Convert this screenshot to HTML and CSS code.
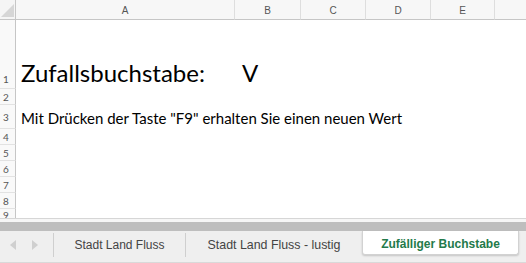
FILE: index.html
```html
<!DOCTYPE html>
<html lang="de">
<head>
<meta charset="utf-8">
<title>Zufälliger Buchstabe</title>
<link rel="stylesheet" href="styles.css">
</head>
<body>
<div class="app">
  <div class="sheet">
    <div class="corner">
      <svg width="16" height="20" viewBox="0 0 16 20"><polygon points="1,17 14,17 14,4" fill="#d6d6d6"/></svg>
    </div>
    <div class="colhead">A</div>
    <div class="colhead">B</div>
    <div class="colhead">C</div>
    <div class="colhead">D</div>
    <div class="colhead">E</div>
    <div class="colhead last"></div>

    <div class="rowhead r1">1</div>
    <div class="cell big">Zufallsbuchstabe:   V</div>

    <div class="rowhead">2</div>
    <div class="cell"></div>

    <div class="rowhead">3</div>
    <div class="cell text">Mit Drücken der Taste "F9" erhalten Sie einen neuen Wert</div>

    <div class="rowhead">4</div>
    <div class="cell"></div>
    <div class="rowhead">5</div>
    <div class="cell"></div>
    <div class="rowhead">6</div>
    <div class="cell"></div>
    <div class="rowhead">7</div>
    <div class="cell"></div>
    <div class="rowhead">8</div>
    <div class="cell"></div>
    <div class="rowhead r9">9</div>
    <div class="cell"></div>
  </div>
  <div class="gap"></div>
  <div class="scrollband"></div>
  <div class="tabbar">
    <div class="nav">
      <svg width="8" height="10" viewBox="0 0 8 10"><polygon points="7,0 7,10 1,5" fill="#cfcfcf"/></svg>
      <svg width="8" height="10" viewBox="0 0 8 10"><polygon points="1,0 1,10 7,5" fill="#cfcfcf"/></svg>
    </div>
    <div class="tab t1">Stadt Land Fluss</div>
    <div class="tab t2">Stadt Land Fluss - lustig</div>
    <div class="tab active">Zufälliger Buchstabe</div>
    <div class="filler"></div>
  </div>
</div>
</body>
</html>
```

FILE: styles.css
```css
html, body {
  margin: 0;
  padding: 0;
  background: #ffffff;
}

.app {
  width: 526px;
  height: 263px;
  overflow: hidden;
  display: flex;
  flex-direction: column;
}

.sheet {
  height: 218px;
  overflow: hidden;
  display: grid;
  grid-template-columns: 16px 219px 66px 65px 65px 64px 1fr;
  grid-template-rows: 20px 69px 16px 24px 16px 16px 16px 16px 16px 16px;
  flex: none;
}

.corner {
  background: #f5f5f5;
  border-right: 1px solid #c6c6c6;
  border-bottom: 1px solid #c6c6c6;
  box-sizing: border-box;
  line-height: 0;
}

.colhead {
  background: #f7f7f7;
  border-bottom: 1px solid #c6c6c6;
  border-right: 1px solid #dedede;
  box-sizing: border-box;
  font-family: "Liberation Sans", Arial, sans-serif;
  font-size: 10px;
  color: #555555;
  display: flex;
  align-items: center;
  justify-content: center;
  padding-top: 1px;
}

.colhead.last {
  border-right: none;
}

.rowhead {
  background: #f9f9f9;
  border-right: 1px solid #c6c6c6;
  border-bottom: 1px solid #e2e2e2;
  box-sizing: border-box;
  font-family: "Lato", "Liberation Sans", sans-serif;
  font-size: 10px;
  color: #555555;
  display: flex;
  align-items: center;
  padding-left: 3px;
}

.rowhead.r1 {
  align-items: flex-end;
  padding-bottom: 3px;
}

.rowhead.r9 {
  align-items: flex-start;
  padding-top: 1px;
  line-height: 10px;
}

.cell {
  grid-column: 2 / -1;
  background: #ffffff;
  white-space: pre;
  color: #000000;
  font-family: "Lato", "Liberation Sans", sans-serif;
  display: flex;
  padding-left: 5px;
}

.cell.big {
  font-size: 24px;
  word-spacing: 6.5px;
  align-items: flex-end;
  padding-bottom: 2px;
}

.cell.text {
  font-size: 15px;
  align-items: center;
  padding-top: 2px;
}

.gap {
  height: 3px;
  border-top: 1px solid #d6d6d6;
  background: #f6f6f6;
  flex: none;
}

.scrollband {
  height: 9px;
  background: #bebebe;
  flex: none;
}

.tabbar {
  flex: 1;
  background: #efefef;
  display: flex;
  align-items: flex-start;
  border-bottom: 1px solid #d9d9d9;
  box-sizing: border-box;
  height: 32px;
  font-family: "Liberation Sans", Arial, sans-serif;
  font-size: 12px;
  color: #444444;
}

.nav {
  width: 54px;
  height: 24px;
  margin-top: 2px;
  border-right: 1px solid #cfcfcf;
  box-sizing: border-box;
  display: flex;
  align-items: center;
  gap: 14px;
  padding-left: 9px;
}

.tab {
  height: 24px;
  margin-top: 2px;
  display: flex;
  align-items: center;
  justify-content: center;
  box-sizing: border-box;
}

.t1 {
  width: 132px;
  border-right: 1px solid #cfcfcf;
}

.t2 {
  width: 176px;
  font-size: 12.4px;
}

.active {
  width: 157px;
  margin-top: 0;
  height: 24px;
  background: #ffffff;
  border: 1px solid #d2d2d2;
  border-top: none;
  border-radius: 0 0 3px 3px;
  box-shadow: 0 1px 2px rgba(0, 0, 0, 0.18);
  color: #237a4a;
  font-weight: bold;
  padding-top: 2px;
}

.filler {
  flex: 1;
}
```
